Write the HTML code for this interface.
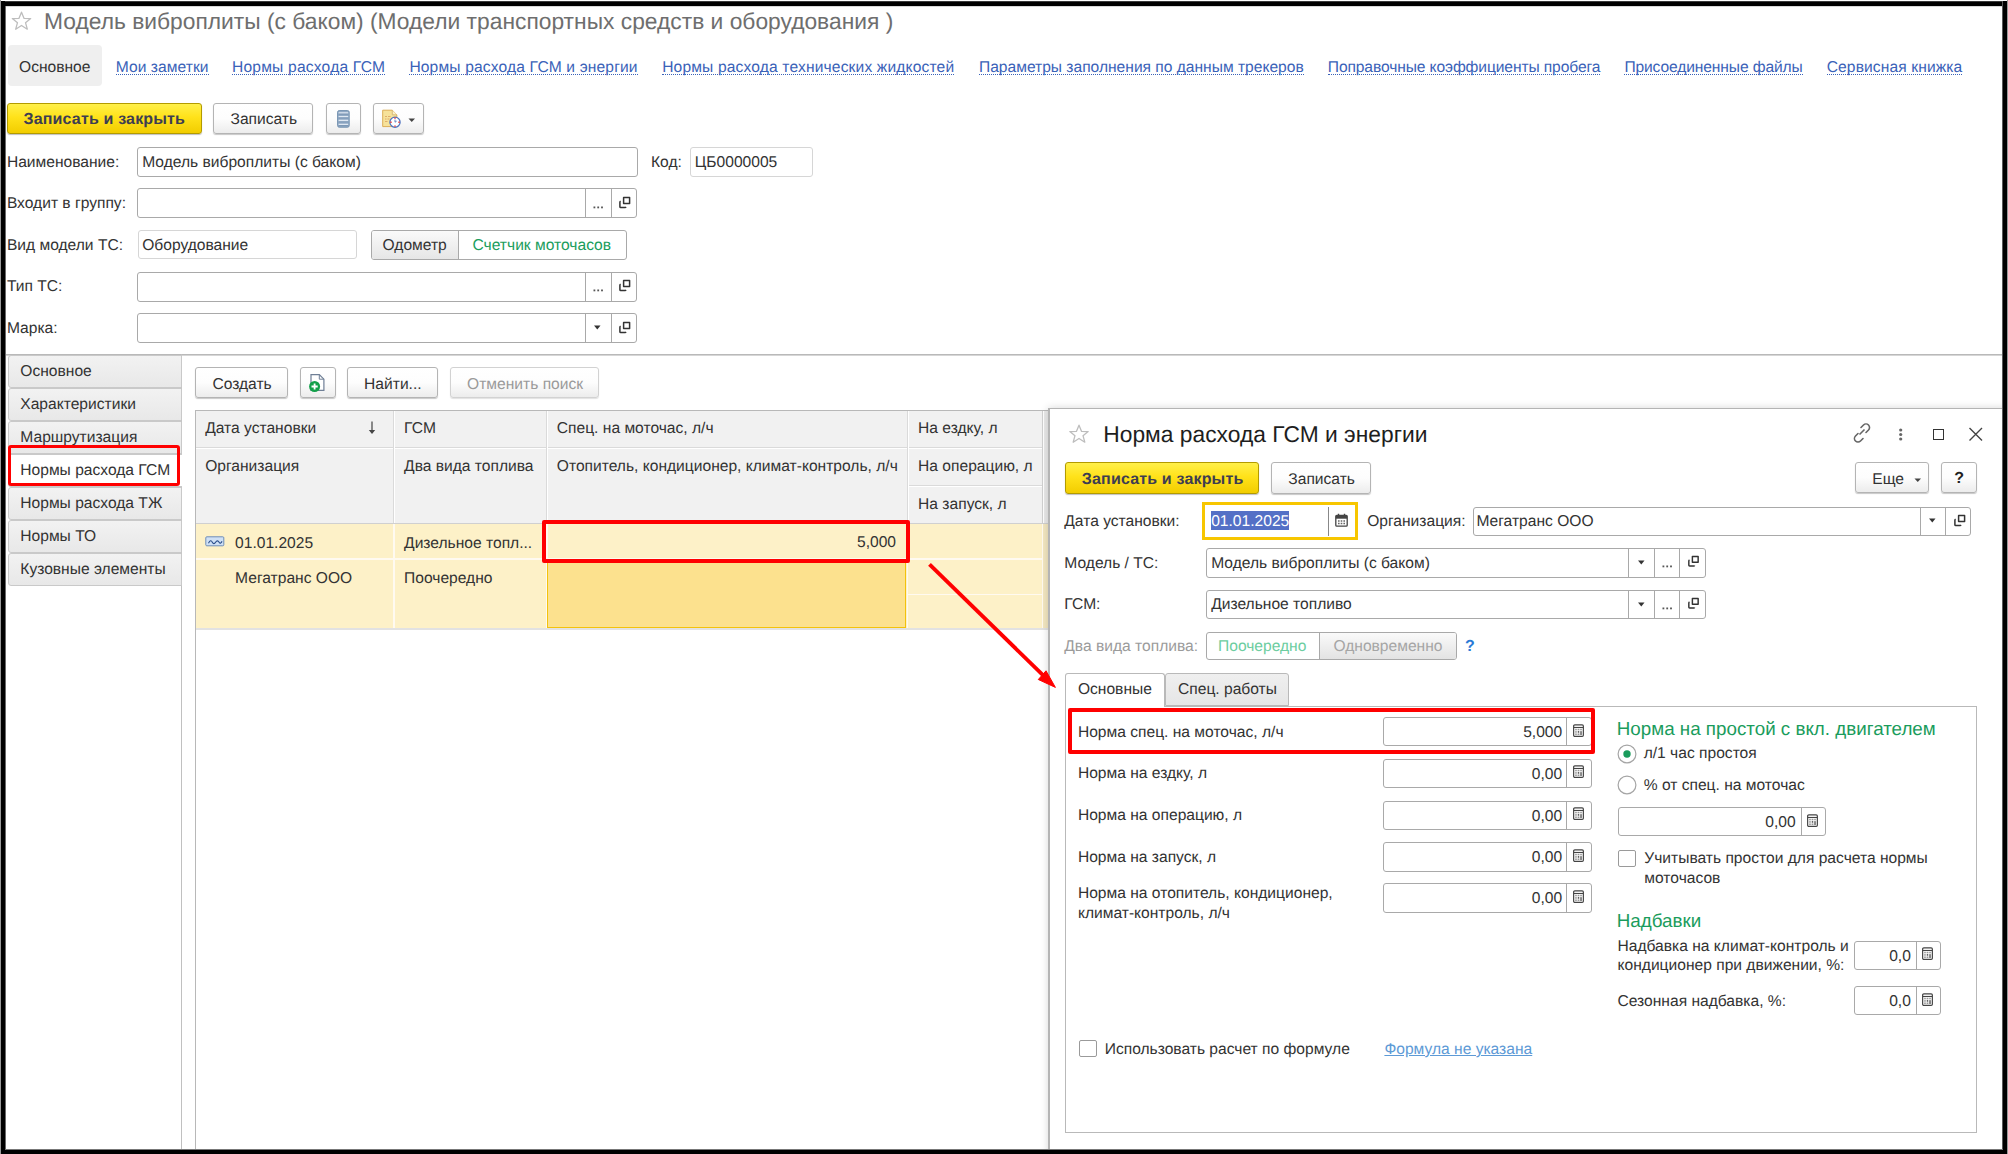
<!DOCTYPE html>
<html><head><meta charset="utf-8">
<style>
*{box-sizing:border-box;margin:0;padding:0}
html,body{width:2008px;height:1154px;overflow:hidden;background:#fff}
body{position:relative;font-family:"Liberation Sans",sans-serif;font-size:15.6px;color:#333;text-rendering:geometricPrecision}
.a{position:absolute}
.t{position:absolute;white-space:nowrap;line-height:1;font-size:15.6px;color:#333}
.lnk{color:#3a62b8}
.lnk::after{content:"";position:absolute;left:0;right:0;top:14px;height:0;border-bottom:1px dotted #3a62b8}
.btn{position:absolute;border:1px solid #b4b4b4;border-radius:3px;background:linear-gradient(#fff 0%,#fdfdfd 50%,#ececec 100%);box-shadow:0 1px 1px rgba(0,0,0,.22)}
.ybtn{position:absolute;border:1px solid #b39b00;border-radius:3px;background:linear-gradient(#fff04a 0%,#ffe21a 45%,#f2cd00 100%);box-shadow:0 1px 1px rgba(0,0,0,.25)}
.inp{position:absolute;border:1px solid #a9a9a9;border-radius:3px;background:#fff}
.inpl{position:absolute;border:1px solid #d6d6d6;border-radius:3px;background:#fff}
.vd{position:absolute;top:0;bottom:0;width:1px;background:#a9a9a9}
.red{position:absolute;border:4px solid #f00;border-radius:2px}
</style></head><body>

<!-- ===== MAIN FORM ===== -->
<!-- title -->
<svg class="a" style="left:11px;top:11px" width="21" height="20" viewBox="0 0 21 20"><path d="M10.5 1.2 L13.1 7.4 L19.7 7.6 L14.5 11.7 L16.3 18.2 L10.5 14.5 L4.7 18.2 L6.5 11.7 L1.3 7.6 L7.9 7.4 Z" fill="none" stroke="#bdbdbd" stroke-width="1.3" stroke-linejoin="round"/></svg>
<div class="t" style="left:44px;top:10px;font-size:22.8px;color:#6e6e6e">Модель виброплиты (с баком) (Модели транспортных средств и оборудования )</div>

<!-- nav tabs -->
<div class="a" style="left:7.5px;top:45px;width:94px;height:41px;background:#efefef;border-radius:4px"></div>
<div class="t" style="left:19px;top:59.5px">Основное</div>
<div class="t lnk" style="left:115.8px;top:59.5px;letter-spacing:0.046px">Мои заметки</div>
<div class="t lnk" style="left:232px;top:59.5px;letter-spacing:0.197px">Нормы расхода ГСМ</div>
<div class="t lnk" style="left:409.4px;top:59.5px;letter-spacing:0.149px">Нормы расхода ГСМ и энергии</div>
<div class="t lnk" style="left:662.2px;top:59.5px;letter-spacing:0.151px">Нормы расхода технических жидкостей</div>
<div class="t lnk" style="left:979px;top:59.5px;letter-spacing:-0.009px">Параметры заполнения по данным трекеров</div>
<div class="t lnk" style="left:1327.8px;top:59.5px;letter-spacing:-0.107px">Поправочные коэффициенты пробега</div>
<div class="t lnk" style="left:1624.4px;top:59.5px;letter-spacing:-0.12px">Присоединенные файлы</div>
<div class="t lnk" style="left:1826.7px;top:59.5px;letter-spacing:0.111px">Сервисная книжка</div>

<!-- toolbar -->
<div class="ybtn" style="left:7px;top:102.5px;width:195px;height:31.5px"></div>
<div class="t" style="left:23.5px;top:112.4px;font-weight:bold;font-size:16px;color:#3d3d52;letter-spacing:0.17px">Записать и закрыть</div>
<div class="btn" style="left:213.4px;top:102.8px;width:100px;height:31px"></div>
<div class="t" style="left:230.5px;top:111.8px">Записать</div>
<div class="btn" style="left:325.5px;top:102.8px;width:35.5px;height:31px"></div>
<svg class="a" style="left:337px;top:109.5px" width="13" height="18" viewBox="0 0 13 18"><rect x="0.6" y="0.6" width="11.6" height="16.6" rx="1.6" fill="#92abc6" stroke="#7391b0" stroke-width="1"/><path d="M1.6 2.8h9.6M1.6 6.6h9.6M1.6 10.5h9.6M1.6 14.3h9.6" stroke="#dfe8f2" stroke-width="1.3"/><path d="M1.6 4.2h9.6M1.6 8h9.6M1.6 11.9h9.6M1.6 15.6h9.6" stroke="#7590b0" stroke-width="0.8"/></svg>
<div class="btn" style="left:373px;top:102.8px;width:50.5px;height:31px"></div>
<svg class="a" style="left:381px;top:109px" width="22" height="20" viewBox="0 0 22 20"><path d="M1.7 1.2h9.6l4.5 4.6v11.8h-14.1z" fill="#f6e29a" stroke="#dcae55" stroke-width="1"/><path d="M11.3 1.2v4.6h4.5" fill="#fbf0c8" stroke="#d0b070" stroke-width="0.8"/><path d="M4 7.5h2M7 7.5h2.5M4 10h1.5M6.5 10h2M4 12.5h2.5" stroke="#d9a060" stroke-width="0.8"/><circle cx="14" cy="13.2" r="5.1" fill="#fff" stroke="#4f74bf" stroke-width="1.3"/><path d="M14 13.2v-2.6M14 13.2l1.6-1" stroke="#4f74bf" stroke-width="0.9"/><path d="M14 8.6v1.2M14 16.6v1.2M9.4 13.2h1.2M17.4 13.2h1.2" stroke="#e22" stroke-width="1.4"/></svg>
<svg class="a" style="left:408px;top:118px" width="8" height="5" viewBox="0 0 8 5"><path d="M0.5 0.5h6.5L3.75 4z" fill="#444"/></svg>


<!-- form fields -->
<div class="t" style="left:6.9px;top:154.9px">Наименование:</div>
<div class="inp" style="left:137.2px;top:146.6px;width:501px;height:30px"></div>
<div class="t" style="left:142.2px;top:154.9px">Модель виброплиты (с баком)</div>
<div class="t" style="left:651px;top:154.9px">Код:</div>
<div class="inpl" style="left:690.2px;top:146.6px;width:122.5px;height:30px"></div>
<div class="t" style="left:694.8px;top:154.9px">ЦБ0000005</div>

<div class="t" style="left:6.9px;top:196.4px">Входит в группу:</div>
<div class="inp" style="left:137.2px;top:188.4px;width:499.8px;height:30px"><div class="vd" style="left:447.3px"></div><div class="vd" style="left:473.1px"></div></div>
<svg class="a" style="left:592.5px;top:205.8px" width="11" height="3" viewBox="0 0 11 3"><rect x="0.5" y="0.5" width="1.8" height="1.8" fill="#555"/><rect x="4.3" y="0.5" width="1.8" height="1.8" fill="#555"/><rect x="8.1" y="0.5" width="1.8" height="1.8" fill="#555"/></svg>
<svg class="a" style="left:618px;top:196px" width="13" height="13" viewBox="0 0 13 13"><path d="M5.6 1.6h6v6h-6z" fill="none" stroke="#333" stroke-width="1.5" stroke-linejoin="round"/><path d="M2.6 5.2Q1.9 5.6 1.9 6.3v4.4q0 .8.8.8h4.4q.6 0 .9-.6" fill="none" stroke="#333" stroke-width="1.5"/></svg>

<div class="t" style="left:6.9px;top:237.9px">Вид модели ТС:</div>
<div class="inpl" style="left:137.6px;top:230.2px;width:219.7px;height:29.3px"></div>
<div class="t" style="left:142.2px;top:237.9px">Оборудование</div>
<div class="a" style="left:370.5px;top:230.2px;width:256.8px;height:29.5px;border:1px solid #a9a9a9;border-radius:3px;background:#fff;overflow:hidden">
  <div class="a" style="left:0;top:0;width:87.5px;height:100%;background:linear-gradient(#fafafa,#e6e6e6);border-right:1px solid #a9a9a9"></div>
</div>
<div class="t" style="left:382.5px;top:237.9px">Одометр</div>
<div class="t" style="left:472.5px;top:237.9px;color:#1a9d5c">Счетчик моточасов</div>

<div class="t" style="left:6.9px;top:279.4px">Тип ТС:</div>
<div class="inp" style="left:137.2px;top:271.6px;width:499.8px;height:30px"><div class="vd" style="left:447.3px"></div><div class="vd" style="left:473.1px"></div></div>
<svg class="a" style="left:592.5px;top:289.0px" width="11" height="3" viewBox="0 0 11 3"><rect x="0.5" y="0.5" width="1.8" height="1.8" fill="#555"/><rect x="4.3" y="0.5" width="1.8" height="1.8" fill="#555"/><rect x="8.1" y="0.5" width="1.8" height="1.8" fill="#555"/></svg>
<svg class="a" style="left:618px;top:279px" width="13" height="13" viewBox="0 0 13 13"><path d="M5.6 1.6h6v6h-6z" fill="none" stroke="#333" stroke-width="1.5" stroke-linejoin="round"/><path d="M2.6 5.2Q1.9 5.6 1.9 6.3v4.4q0 .8.8.8h4.4q.6 0 .9-.6" fill="none" stroke="#333" stroke-width="1.5"/></svg>

<div class="t" style="left:6.9px;top:320.9px">Марка:</div>
<div class="inp" style="left:137.2px;top:313.3px;width:499.8px;height:29.6px"><div class="vd" style="left:447.3px"></div><div class="vd" style="left:473.1px"></div></div>
<svg class="a" style="left:594px;top:325px" width="7" height="5" viewBox="0 0 7 5"><path d="M0 0.5h6.5L3.25 4.5z" fill="#333"/></svg>
<svg class="a" style="left:618px;top:320.5px" width="13" height="13" viewBox="0 0 13 13"><path d="M5.6 1.6h6v6h-6z" fill="none" stroke="#333" stroke-width="1.5" stroke-linejoin="round"/><path d="M2.6 5.2Q1.9 5.6 1.9 6.3v4.4q0 .8.8.8h4.4q.6 0 .9-.6" fill="none" stroke="#333" stroke-width="1.5"/></svg>

<!-- separator line -->
<div class="a" style="left:0;top:354px;width:2008px;height:2px;background:linear-gradient(#b9b9b9 60%,#d6d6d6 60%)"></div>

<!-- side tabs -->
<div class="a" style="left:181.2px;top:354px;width:1.2px;height:100px;background:#c0c0c0"></div><div class="a" style="left:181.2px;top:487px;width:1.2px;height:667px;background:#c0c0c0"></div>
<div class="a" style="left:7.9px;top:354.6px;width:174px;height:33px;background:linear-gradient(#f2f2f2,#e8e8e8);border:1px solid #c9c9c9;border-radius:3px 0 0 3px;"></div>
<div class="t" style="left:20.3px;top:364.0px">Основное</div>
<div class="a" style="left:7.9px;top:387.6px;width:174px;height:33px;background:linear-gradient(#f2f2f2,#e8e8e8);border:1px solid #c9c9c9;border-radius:3px 0 0 3px;"></div>
<div class="t" style="left:20.3px;top:397.0px">Характеристики</div>
<div class="a" style="left:7.9px;top:420.6px;width:174px;height:33px;background:linear-gradient(#f2f2f2,#e8e8e8);border:1px solid #c9c9c9;border-radius:3px 0 0 3px;"></div>
<div class="t" style="left:20.3px;top:430.0px">Маршрутизация</div>
<div class="a" style="left:7.9px;top:453.6px;width:174px;height:33px;background:#fff;border:1px solid #c9c9c9;border-radius:3px 0 0 3px;border-right:none;"></div>
<div class="t" style="left:20.3px;top:463.0px">Нормы расхода ГСМ</div>
<div class="a" style="left:7.9px;top:486.6px;width:174px;height:33px;background:linear-gradient(#f2f2f2,#e8e8e8);border:1px solid #c9c9c9;border-radius:3px 0 0 3px;"></div>
<div class="t" style="left:20.3px;top:496.0px">Нормы расхода ТЖ</div>
<div class="a" style="left:7.9px;top:519.6px;width:174px;height:33px;background:linear-gradient(#f2f2f2,#e8e8e8);border:1px solid #c9c9c9;border-radius:3px 0 0 3px;"></div>
<div class="t" style="left:20.3px;top:529.0px">Нормы ТО</div>
<div class="a" style="left:7.9px;top:552.6px;width:174px;height:33px;background:linear-gradient(#f2f2f2,#e8e8e8);border:1px solid #c9c9c9;border-radius:3px 0 0 3px;"></div>
<div class="t" style="left:20.3px;top:562.0px">Кузовные элементы</div>
<div class="red" style="left:8.3px;top:445px;width:171.4px;height:41.2px;border-width:3.6px;border-radius:3px"></div>


<!-- table toolbar -->
<div class="btn" style="left:194.9px;top:367.1px;width:93px;height:30.5px"></div>
<div class="t" style="left:212.4px;top:376.8px">Создать</div>
<div class="btn" style="left:299.6px;top:367.1px;width:36px;height:30.5px"></div>
<svg class="a" style="left:307px;top:373px" width="20" height="20" viewBox="0 0 20 20"><path d="M4 1.6h8.3l4.6 4.6v11.2h-12.9z" fill="#fff" stroke="#6f7f96" stroke-width="1.2"/><path d="M12.3 1.6v4.6h4.6" fill="none" stroke="#6f7f96" stroke-width="1"/><circle cx="7.6" cy="13.5" r="5.5" fill="#13a04a"/><path d="M7.6 10.4v6.2M4.5 13.5h6.2" stroke="#fff" stroke-width="1.8"/></svg>
<div class="btn" style="left:347.2px;top:367.1px;width:90.7px;height:30.5px"></div>
<div class="t" style="left:364.1px;top:376.8px">Найти...</div>
<div class="btn" style="left:450px;top:367.1px;width:149px;height:30.5px;border-color:#d2d2d2;box-shadow:0 1px 1px rgba(0,0,0,.12)"></div>
<div class="t" style="left:467.1px;top:376.8px;color:#9a9a9a">Отменить поиск</div>

<!-- table -->
<div class="a" style="left:194.8px;top:409.6px;width:1.3px;height:745px;background:#b8b8b8"></div>
<div class="a" style="left:195.5px;top:409.6px;width:860px;height:1.3px;background:#b8b8b8"></div>
<div class="a" style="left:196px;top:410.8px;width:852px;height:112.5px;background:#f1f1f1"></div>
<!-- header horizontal dividers -->
<div class="a" style="left:196px;top:447px;width:711px;height:2px;background:linear-gradient(#dadada 50%,#fff 50%)"></div>
<div class="a" style="left:907px;top:447px;width:136px;height:2px;background:linear-gradient(#dadada 50%,#fff 50%)"></div>
<div class="a" style="left:907px;top:485px;width:136px;height:2px;background:linear-gradient(#dadada 50%,#fff 50%)"></div>
<div class="a" style="left:196px;top:522.5px;width:852px;height:1.3px;background:#d0d0d0"></div>
<!-- header vertical dividers -->
<div class="a" style="left:393px;top:410.8px;width:2px;height:112px;background:linear-gradient(90deg,#dadada 50%,#fff 50%)"></div>
<div class="a" style="left:545.8px;top:410.8px;width:2px;height:112px;background:linear-gradient(90deg,#dadada 50%,#fff 50%)"></div>
<div class="a" style="left:906.6px;top:410.8px;width:2px;height:112px;background:linear-gradient(90deg,#dadada 50%,#fff 50%)"></div>
<div class="a" style="left:1042.3px;top:410.8px;width:2px;height:112px;background:linear-gradient(90deg,#d0d0d0 50%,#fff 50%)"></div>
<div class="a" style="left:1044.3px;top:410.8px;width:5px;height:112px;background:#e9e9e9"></div>

<div class="t" style="left:205.2px;top:421.1px">Дата установки</div>
<svg class="a" style="left:367px;top:420px" width="10" height="15" viewBox="0 0 10 15"><path d="M5 1.5v9" fill="none" stroke="#6e6e6e" stroke-width="1.6"/><path d="M1.8 10L8.2 10L5 13.9Z" fill="#454545"/></svg>
<div class="t" style="left:404.1px;top:421.1px">ГСМ</div>
<div class="t" style="left:556.8px;top:421.1px">Спец. на моточас, л/ч</div>
<div class="t" style="left:918.1px;top:421.1px">На ездку, л</div>
<div class="t" style="left:205.2px;top:459.0px">Организация</div>
<div class="t" style="left:404.1px;top:459.0px">Два вида топлива</div>
<div class="t" style="left:556.8px;top:459.0px">Отопитель, кондиционер, климат-контроль, л/ч</div>
<div class="t" style="left:918.1px;top:459.0px">На операцию, л</div>
<div class="t" style="left:918.1px;top:496.6px">На запуск, л</div>

<!-- body rows -->
<div class="a" style="left:196px;top:523.8px;width:852px;height:104.5px;background:#fdf1c8"></div>
<div class="a" style="left:1043px;top:523.8px;width:6px;height:104.5px;background:#f3e7c1"></div>
<div class="a" style="left:196px;top:558px;width:847px;height:1.6px;background:#fffaf0"></div>
<div class="a" style="left:907px;top:593.5px;width:136px;height:1.6px;background:#fffaf0"></div>
<div class="a" style="left:393.2px;top:523.8px;width:1.6px;height:104.5px;background:#fffaf0"></div>
<div class="a" style="left:546px;top:523.8px;width:1.6px;height:104.5px;background:#fffaf0"></div>
<div class="a" style="left:906.5px;top:523.8px;width:1.6px;height:104.5px;background:#fffaf0"></div>
<div class="a" style="left:1042px;top:523.8px;width:1.2px;height:104.5px;background:#fffaf0"></div>
<div class="a" style="left:547.3px;top:561.5px;width:359px;height:66px;background:#fce18e;border:1.6px solid #f3c20c"></div>
<div class="a" style="left:196px;top:628.2px;width:853px;height:2px;background:#e2e2e2"></div>

<svg class="a" style="left:205px;top:536px" width="20" height="11" viewBox="0 0 20 11"><rect x="0.8" y="0.8" width="18" height="9" rx="1" fill="#cfe0f5" stroke="#6e8db8" stroke-width="1"/><path d="M3.5 7.2c1.5-3 2.8-3 3.8-1s2.2 1.8 3.3 0 2.5-1.8 3.5 0 1.8 1 3-0.8" fill="none" stroke="#2a4d8a" stroke-width="1.1"/></svg>
<div class="t" style="left:235.1px;top:535.6px">01.01.2025</div>
<div class="t" style="left:404.1px;top:535.6px">Дизельное топл...</div>
<div class="t" style="left:857px;top:535.4px">5,000</div>
<div class="t" style="left:235.1px;top:570.6px">Мегатранс ООО</div>
<div class="t" style="left:404.1px;top:570.6px">Поочередно</div>
<div class="red" style="left:542px;top:520px;width:367.8px;height:42.6px"></div>


<!-- ===== DIALOG ===== -->
<div class="a" style="left:1048px;top:408px;width:961px;height:800px;background:#fff;border-style:solid;border-color:#b4b4b4;border-width:1px 0 0 2px;box-shadow:0 0 8px rgba(0,0,0,.16)"></div>
<svg class="a" style="left:1068px;top:424px" width="22" height="20" viewBox="0 0 21 20"><path d="M10.5 1.2 L13.1 7.4 L19.7 7.6 L14.5 11.7 L16.3 18.2 L10.5 14.5 L4.7 18.2 L6.5 11.7 L1.3 7.6 L7.9 7.4 Z" fill="none" stroke="#bdbdbd" stroke-width="1.3" stroke-linejoin="round"/></svg>
<div class="t" style="left:1103.3px;top:422.7px;font-size:22.8px;color:#1e1e1e">Норма расхода ГСМ и энергии</div>
<svg class="a" style="left:1850px;top:422px" width="24" height="22" viewBox="0 0 24 22"><path d="M9.5 12.5l5-5" stroke="#666" stroke-width="1.6" fill="none"/><path d="M11 5.5l2.5-2.5a3.5 3.5 0 0 1 5 5l-2.5 2.5" stroke="#666" stroke-width="1.6" fill="none" stroke-linecap="round"/><path d="M13 16.5l-2.5 2.5a3.5 3.5 0 0 1 -5 -5l2.5-2.5" stroke="#666" stroke-width="1.6" fill="none" stroke-linecap="round"/></svg>
<svg class="a" style="left:1897px;top:427px" width="8" height="15" viewBox="0 0 8 15"><circle cx="3.7" cy="3" r="1.6" fill="#666"/><circle cx="3.7" cy="7.5" r="1.6" fill="#666"/><circle cx="3.7" cy="12" r="1.6" fill="#666"/></svg>
<div class="a" style="left:1933px;top:429.3px;width:11px;height:10.5px;border:1.6px solid #333"></div>
<svg class="a" style="left:1968px;top:427px" width="15" height="14" viewBox="0 0 15 14"><path d="M1.5 1l12.5 12.5M14 1L1.5 13.5" stroke="#444" stroke-width="1.4"/></svg>
<div class="ybtn" style="left:1064.7px;top:462.3px;width:194px;height:31.4px"></div>
<div class="t" style="left:1081.8px;top:472.1px;font-size:16px;font-weight:bold;color:#3d3d52;letter-spacing:0.17px">Записать и закрыть</div>
<div class="btn" style="left:1270.5px;top:462.3px;width:100.7px;height:31.4px"></div>
<div class="t" style="left:1288.3px;top:471.5px;">Записать</div>
<div class="btn" style="left:1855.4px;top:462.4px;width:73.2px;height:31px"></div>
<div class="t" style="left:1872.3px;top:471.5px;">Еще</div>
<svg class="a" style="left:1913.5px;top:477.5px" width="8" height="5" viewBox="0 0 8 5"><path d="M0.5 0.5h6.5L3.75 4z" fill="#444"/></svg>
<div class="btn" style="left:1940.5px;top:462.4px;width:36.2px;height:31px"></div>
<div class="t" style="left:1954.2px;top:471.2px;font-size:16px;font-weight:bold;color:#222">?</div>
<div class="t" style="left:1064.3px;top:513.8px;">Дата установки:</div>
<div class="a" style="left:1202.1px;top:502.3px;width:156px;height:37.7px;border:3px solid #f7c600;background:#fff"></div>
<div class="a" style="left:1327.8px;top:507px;width:1.2px;height:28.5px;background:#888"></div>
<svg class="a" style="left:1334.5px;top:512.5px" width="13" height="14" viewBox="0 0 13 14"><rect x="0.8" y="2.5" width="11.4" height="10.7" rx="1" fill="#fff" stroke="#444" stroke-width="1.3"/><rect x="0.8" y="2.5" width="11.4" height="3.2" fill="#444"/><path d="M3.5 0.8v3M9.5 0.8v3" stroke="#444" stroke-width="1.4"/><path d="M3 8h1.6M5.7 8h1.6M8.4 8h1.6M3 10.5h1.6M5.7 10.5h1.6M8.4 10.5h1.6" stroke="#666" stroke-width="1.3"/></svg>
<div class="a" style="left:1210.8px;top:510.6px;width:78.1px;height:19.6px;background:#5470c6"></div>
<div class="t" style="left:1211.2px;top:513.8px;color:#fff">01.01.2025</div>
<div class="t" style="left:1367.2px;top:513.8px;">Организация:</div>
<div class="inp" style="left:1472.5px;top:506.6px;width:498.5px;height:29.3px"><div class="vd" style="left:446.3px"></div><div class="vd" style="left:471.5px"></div></div>
<div class="t" style="left:1476.4px;top:513.8px;">Мегатранс ООО</div>
<svg class="a" style="left:1929.3px;top:517.6px" width="7" height="5" viewBox="0 0 7 5"><path d="M0 0.5h6.5L3.25 4.5z" fill="#333"/></svg>
<svg class="a" style="left:1952.8px;top:513.5px" width="13" height="13" viewBox="0 0 13 13"><path d="M5.6 1.6h6v6h-6z" fill="none" stroke="#333" stroke-width="1.5" stroke-linejoin="round"/><path d="M2.6 5.2Q1.9 5.6 1.9 6.3v4.4q0 .8.8.8h4.4q.6 0 .9-.6" fill="none" stroke="#333" stroke-width="1.5"/></svg>
<div class="t" style="left:1064.3px;top:556.4px;">Модель / ТС:</div>
<div class="inp" style="left:1206.2px;top:547.8px;width:499.5px;height:29.8px"><div class="vd" style="left:420.8px"></div><div class="vd" style="left:446.6px"></div><div class="vd" style="left:472.2px"></div></div>
<div class="t" style="left:1211.2px;top:556.4px;">Модель виброплиты (с баком)</div>
<svg class="a" style="left:1637.5px;top:559.8px" width="7" height="5" viewBox="0 0 7 5"><path d="M0 0.5h6.5L3.25 4.5z" fill="#333"/></svg>
<svg class="a" style="left:1661.5px;top:565.2px" width="11" height="3" viewBox="0 0 11 3"><rect x="0.5" y="0.5" width="1.8" height="1.8" fill="#555"/><rect x="4.3" y="0.5" width="1.8" height="1.8" fill="#555"/><rect x="8.1" y="0.5" width="1.8" height="1.8" fill="#555"/></svg>
<svg class="a" style="left:1687px;top:554.8px" width="12.5" height="12.5" viewBox="0 0 13 13"><path d="M5.6 1.6h6v6h-6z" fill="none" stroke="#333" stroke-width="1.5" stroke-linejoin="round"/><path d="M2.6 5.2Q1.9 5.6 1.9 6.3v4.4q0 .8.8.8h4.4q.6 0 .9-.6" fill="none" stroke="#333" stroke-width="1.5"/></svg>
<div class="t" style="left:1064.3px;top:597.1px;">ГСМ:</div>
<div class="inp" style="left:1206.2px;top:589.5px;width:499.5px;height:29.8px"><div class="vd" style="left:420.8px"></div><div class="vd" style="left:446.6px"></div><div class="vd" style="left:472.2px"></div></div>
<div class="t" style="left:1211.2px;top:597.1px;">Дизельное топливо</div>
<svg class="a" style="left:1637.5px;top:601.5px" width="7" height="5" viewBox="0 0 7 5"><path d="M0 0.5h6.5L3.25 4.5z" fill="#333"/></svg>
<svg class="a" style="left:1661.5px;top:606.9px" width="11" height="3" viewBox="0 0 11 3"><rect x="0.5" y="0.5" width="1.8" height="1.8" fill="#555"/><rect x="4.3" y="0.5" width="1.8" height="1.8" fill="#555"/><rect x="8.1" y="0.5" width="1.8" height="1.8" fill="#555"/></svg>
<svg class="a" style="left:1687px;top:596.5px" width="12.5" height="12.5" viewBox="0 0 13 13"><path d="M5.6 1.6h6v6h-6z" fill="none" stroke="#333" stroke-width="1.5" stroke-linejoin="round"/><path d="M2.6 5.2Q1.9 5.6 1.9 6.3v4.4q0 .8.8.8h4.4q.6 0 .9-.6" fill="none" stroke="#333" stroke-width="1.5"/></svg>
<div class="t" style="left:1064.3px;top:638.8px;color:#9b9b9b">Два вида топлива:</div>
<div class="a" style="left:1206.2px;top:631.5px;width:250.5px;height:28.8px;border:1px solid #a9a9a9;border-radius:3px;background:#fff;overflow:hidden"><div class="a" style="left:111.5px;top:0;right:0;height:100%;background:linear-gradient(#fafafa,#e3e3e3);border-left:1px solid #a9a9a9"></div></div>
<div class="t" style="left:1218px;top:638.8px;color:#6ccda0">Поочередно</div>
<div class="t" style="left:1333.4px;top:638.8px;color:#a5a5a5">Одновременно</div>
<div class="t" style="left:1465px;top:638.5px;font-size:16px;color:#2b7bd6;font-weight:bold">?</div>
<div class="a" style="left:1064.5px;top:705.5px;width:912.6px;height:427.3px;border:1.3px solid #b9b9b9"></div>
<div class="a" style="left:1064.8px;top:672.5px;width:100px;height:34px;background:#fff;border:1.2px solid #b9b9b9;border-bottom:none;border-radius:3px 3px 0 0"></div>
<div class="a" style="left:1164.5px;top:672.5px;width:124px;height:33px;background:linear-gradient(#efefef,#e6e6e6);border:1.2px solid #b9b9b9;border-radius:3px 3px 0 0"></div>
<div class="t" style="left:1077.9px;top:681.8px;">Основные</div>
<div class="t" style="left:1178px;top:681.8px;">Спец. работы</div>
<div class="t" style="left:1077.9px;top:724.5px;">Норма спец. на моточас, л/ч</div>
<div class="inp" style="left:1383.4px;top:716.9px;width:208.5px;height:29.5px"><div class="vd" style="left:182px"></div></div>
<div class="t" style="right:445.79999999999995px;top:724.9px">5,000</div>
<svg class="a" style="left:1573.0px;top:723.5px" width="11" height="13.2" viewBox="0 0 12 14"><rect x="0.7" y="0.7" width="10.6" height="12.6" rx="1.3" fill="#fff" stroke="#444" stroke-width="1.3"/><path d="M1 3.6h10" stroke="#444" stroke-width="1.2"/><rect x="2.2" y="5" width="2.1" height="1.7" fill="#aaa"/><rect x="5" y="5" width="2" height="1.7" fill="#999"/><rect x="7.7" y="5" width="2.1" height="1.7" fill="#aaa"/><rect x="2.2" y="7.6" width="2.1" height="1.7" fill="#aaa"/><rect x="5.2" y="7.7" width="1.6" height="1.5" fill="#333"/><rect x="2.2" y="10.1" width="2.1" height="1.7" fill="#aaa"/><rect x="5" y="10.1" width="2" height="1.7" fill="#999"/><rect x="7.7" y="7.6" width="2.1" height="4.2" fill="#888"/></svg>
<div class="t" style="left:1077.9px;top:766.4px;">Норма на ездку, л</div>
<div class="inp" style="left:1383.4px;top:758.8px;width:208.5px;height:29.5px"><div class="vd" style="left:182px"></div></div>
<div class="t" style="right:445.79999999999995px;top:766.8px">0,00</div>
<svg class="a" style="left:1573.0px;top:765.4px" width="11" height="13.2" viewBox="0 0 12 14"><rect x="0.7" y="0.7" width="10.6" height="12.6" rx="1.3" fill="#fff" stroke="#444" stroke-width="1.3"/><path d="M1 3.6h10" stroke="#444" stroke-width="1.2"/><rect x="2.2" y="5" width="2.1" height="1.7" fill="#aaa"/><rect x="5" y="5" width="2" height="1.7" fill="#999"/><rect x="7.7" y="5" width="2.1" height="1.7" fill="#aaa"/><rect x="2.2" y="7.6" width="2.1" height="1.7" fill="#aaa"/><rect x="5.2" y="7.7" width="1.6" height="1.5" fill="#333"/><rect x="2.2" y="10.1" width="2.1" height="1.7" fill="#aaa"/><rect x="5" y="10.1" width="2" height="1.7" fill="#999"/><rect x="7.7" y="7.6" width="2.1" height="4.2" fill="#888"/></svg>
<div class="t" style="left:1077.9px;top:808.3px;">Норма на операцию, л</div>
<div class="inp" style="left:1383.4px;top:800.7px;width:208.5px;height:29.5px"><div class="vd" style="left:182px"></div></div>
<div class="t" style="right:445.79999999999995px;top:808.7px">0,00</div>
<svg class="a" style="left:1573.0px;top:807.3px" width="11" height="13.2" viewBox="0 0 12 14"><rect x="0.7" y="0.7" width="10.6" height="12.6" rx="1.3" fill="#fff" stroke="#444" stroke-width="1.3"/><path d="M1 3.6h10" stroke="#444" stroke-width="1.2"/><rect x="2.2" y="5" width="2.1" height="1.7" fill="#aaa"/><rect x="5" y="5" width="2" height="1.7" fill="#999"/><rect x="7.7" y="5" width="2.1" height="1.7" fill="#aaa"/><rect x="2.2" y="7.6" width="2.1" height="1.7" fill="#aaa"/><rect x="5.2" y="7.7" width="1.6" height="1.5" fill="#333"/><rect x="2.2" y="10.1" width="2.1" height="1.7" fill="#aaa"/><rect x="5" y="10.1" width="2" height="1.7" fill="#999"/><rect x="7.7" y="7.6" width="2.1" height="4.2" fill="#888"/></svg>
<div class="t" style="left:1077.9px;top:849.6px;">Норма на запуск, л</div>
<div class="inp" style="left:1383.4px;top:842px;width:208.5px;height:29.5px"><div class="vd" style="left:182px"></div></div>
<div class="t" style="right:445.79999999999995px;top:850.0px">0,00</div>
<svg class="a" style="left:1573.0px;top:848.6px" width="11" height="13.2" viewBox="0 0 12 14"><rect x="0.7" y="0.7" width="10.6" height="12.6" rx="1.3" fill="#fff" stroke="#444" stroke-width="1.3"/><path d="M1 3.6h10" stroke="#444" stroke-width="1.2"/><rect x="2.2" y="5" width="2.1" height="1.7" fill="#aaa"/><rect x="5" y="5" width="2" height="1.7" fill="#999"/><rect x="7.7" y="5" width="2.1" height="1.7" fill="#aaa"/><rect x="2.2" y="7.6" width="2.1" height="1.7" fill="#aaa"/><rect x="5.2" y="7.7" width="1.6" height="1.5" fill="#333"/><rect x="2.2" y="10.1" width="2.1" height="1.7" fill="#aaa"/><rect x="5" y="10.1" width="2" height="1.7" fill="#999"/><rect x="7.7" y="7.6" width="2.1" height="4.2" fill="#888"/></svg>
<div class="inp" style="left:1383.4px;top:883.4px;width:208.5px;height:29.5px"><div class="vd" style="left:182px"></div></div>
<div class="t" style="right:445.79999999999995px;top:891.4px">0,00</div>
<svg class="a" style="left:1573.0px;top:890.0px" width="11" height="13.2" viewBox="0 0 12 14"><rect x="0.7" y="0.7" width="10.6" height="12.6" rx="1.3" fill="#fff" stroke="#444" stroke-width="1.3"/><path d="M1 3.6h10" stroke="#444" stroke-width="1.2"/><rect x="2.2" y="5" width="2.1" height="1.7" fill="#aaa"/><rect x="5" y="5" width="2" height="1.7" fill="#999"/><rect x="7.7" y="5" width="2.1" height="1.7" fill="#aaa"/><rect x="2.2" y="7.6" width="2.1" height="1.7" fill="#aaa"/><rect x="5.2" y="7.7" width="1.6" height="1.5" fill="#333"/><rect x="2.2" y="10.1" width="2.1" height="1.7" fill="#aaa"/><rect x="5" y="10.1" width="2" height="1.7" fill="#999"/><rect x="7.7" y="7.6" width="2.1" height="4.2" fill="#888"/></svg>
<div class="t" style="left:1077.9px;top:885.8px;">Норма на отопитель, кондиционер,</div>
<div class="t" style="left:1077.9px;top:905.7px;">климат-контроль, л/ч</div>
<div class="red" style="left:1068.3px;top:707.9px;width:526.6px;height:46.2px"></div>
<div class="t" style="left:1616.8px;top:719.5px;font-size:18.8px;color:#1a9c5c">Норма на простой с вкл. двигателем</div>
<svg class="a" style="left:1617px;top:743.5px" width="21" height="21" viewBox="0 0 21 21"><circle cx="10" cy="10" r="8.9" fill="#fff" stroke="#a5a5a5" stroke-width="1.2"/><circle cx="10" cy="10" r="3.7" fill="#1a9c5c"/></svg>
<div class="t" style="left:1643.7px;top:746.2px;">л/1 час простоя</div>
<svg class="a" style="left:1617px;top:775.2px" width="21" height="21" viewBox="0 0 21 21"><circle cx="10" cy="10" r="8.9" fill="#fff" stroke="#a5a5a5" stroke-width="1.2"/></svg>
<div class="t" style="left:1643.7px;top:778.3px;">% от спец. на моточас</div>
<div class="inp" style="left:1617.5px;top:807.3px;width:208.8px;height:29.2px"><div class="vd" style="left:182.5px"></div></div>
<div class="t" style="right:212.4000000000001px;top:815.3px">0,00</div>
<svg class="a" style="left:1807.0px;top:814.1px" width="11" height="13.2" viewBox="0 0 12 14"><rect x="0.7" y="0.7" width="10.6" height="12.6" rx="1.3" fill="#fff" stroke="#444" stroke-width="1.3"/><path d="M1 3.6h10" stroke="#444" stroke-width="1.2"/><rect x="2.2" y="5" width="2.1" height="1.7" fill="#aaa"/><rect x="5" y="5" width="2" height="1.7" fill="#999"/><rect x="7.7" y="5" width="2.1" height="1.7" fill="#aaa"/><rect x="2.2" y="7.6" width="2.1" height="1.7" fill="#aaa"/><rect x="5.2" y="7.7" width="1.6" height="1.5" fill="#333"/><rect x="2.2" y="10.1" width="2.1" height="1.7" fill="#aaa"/><rect x="5" y="10.1" width="2" height="1.7" fill="#999"/><rect x="7.7" y="7.6" width="2.1" height="4.2" fill="#888"/></svg>
<div class="a" style="left:1618.4px;top:850.3px;width:18px;height:17px;border:1.2px solid #9a9a9a;border-radius:2px;background:#fff"></div>
<div class="t" style="left:1644.3px;top:851.1px;">Учитывать простои для расчета нормы</div>
<div class="t" style="left:1644.3px;top:870.5px;">моточасов</div>
<div class="t" style="left:1616.8px;top:911.9px;font-size:18.8px;color:#1a9c5c">Надбавки</div>
<div class="t" style="left:1617.5px;top:939.0px;">Надбавка на климат-контроль и</div>
<div class="t" style="left:1617.5px;top:958.4px;">кондиционер при движении, %:</div>
<div class="inp" style="left:1854.4px;top:940.9px;width:86.4px;height:28.7px"><div class="vd" style="left:60.5px"></div></div>
<div class="t" style="right:97.20000000000005px;top:948.8px">0,0</div>
<svg class="a" style="left:1921.5px;top:947.1px" width="11" height="13.2" viewBox="0 0 12 14"><rect x="0.7" y="0.7" width="10.6" height="12.6" rx="1.3" fill="#fff" stroke="#444" stroke-width="1.3"/><path d="M1 3.6h10" stroke="#444" stroke-width="1.2"/><rect x="2.2" y="5" width="2.1" height="1.7" fill="#aaa"/><rect x="5" y="5" width="2" height="1.7" fill="#999"/><rect x="7.7" y="5" width="2.1" height="1.7" fill="#aaa"/><rect x="2.2" y="7.6" width="2.1" height="1.7" fill="#aaa"/><rect x="5.2" y="7.7" width="1.6" height="1.5" fill="#333"/><rect x="2.2" y="10.1" width="2.1" height="1.7" fill="#aaa"/><rect x="5" y="10.1" width="2" height="1.7" fill="#999"/><rect x="7.7" y="7.6" width="2.1" height="4.2" fill="#888"/></svg>
<div class="t" style="left:1617.5px;top:994.4px;">Сезонная надбавка, %:</div>
<div class="inp" style="left:1854.4px;top:986.1px;width:86.4px;height:28.8px"><div class="vd" style="left:60.5px"></div></div>
<div class="t" style="right:97.20000000000005px;top:994.1px">0,0</div>
<svg class="a" style="left:1921.5px;top:992.6px" width="11" height="13.2" viewBox="0 0 12 14"><rect x="0.7" y="0.7" width="10.6" height="12.6" rx="1.3" fill="#fff" stroke="#444" stroke-width="1.3"/><path d="M1 3.6h10" stroke="#444" stroke-width="1.2"/><rect x="2.2" y="5" width="2.1" height="1.7" fill="#aaa"/><rect x="5" y="5" width="2" height="1.7" fill="#999"/><rect x="7.7" y="5" width="2.1" height="1.7" fill="#aaa"/><rect x="2.2" y="7.6" width="2.1" height="1.7" fill="#aaa"/><rect x="5.2" y="7.7" width="1.6" height="1.5" fill="#333"/><rect x="2.2" y="10.1" width="2.1" height="1.7" fill="#aaa"/><rect x="5" y="10.1" width="2" height="1.7" fill="#999"/><rect x="7.7" y="7.6" width="2.1" height="4.2" fill="#888"/></svg>
<div class="a" style="left:1078.8px;top:1039.6px;width:18.2px;height:17.4px;border:1.2px solid #9a9a9a;border-radius:2px;background:#fff"></div>
<div class="t" style="left:1104.7px;top:1041.7px;">Использовать расчет по формуле</div>
<div class="t" style="left:1384.4px;top:1041.7px;color:#5d9ad6;text-decoration:underline">Формула не указана</div>
<svg class="a" style="left:0;top:0" width="2008" height="1154" viewBox="0 0 2008 1154"><path d="M929.5 564.3L1045 677.2" stroke="#f00" stroke-width="3.9" fill="none"/><path d="M1055.4 687.4L1038.3 679.5L1046 670.8Z" fill="#f00" stroke="#f00" stroke-width="1" stroke-linejoin="round"/></svg>
<div class="a" style="left:1px;top:1px;width:2006px;height:1px;background:#3a3a3a"></div>
<div class="a" style="left:1px;top:2px;width:2006px;height:4px;background:#000"></div>
<div class="a" style="left:1px;top:6px;width:2006px;height:1px;background:#d8d8d8"></div>
<div class="a" style="left:1px;top:1px;width:4px;height:1153px;background:#000"></div>
<div class="a" style="left:5px;top:6px;width:1px;height:1143px;background:#6a6a6a"></div>
<div class="a" style="left:2002px;top:1px;width:1px;height:1153px;background:#5a5a5a"></div>
<div class="a" style="left:2003px;top:1px;width:4px;height:1153px;background:#000"></div>
<div class="a" style="left:5px;top:1149px;width:1998px;height:1px;background:#777"></div>
<div class="a" style="left:1px;top:1150px;width:2006px;height:4px;background:#000"></div>
<div class="a" style="left:0;top:0;width:1px;height:1154px;background:#9a9a9a"></div>
<div class="a" style="left:2007px;top:0;width:1px;height:1154px;background:#999"></div>

</body></html>
